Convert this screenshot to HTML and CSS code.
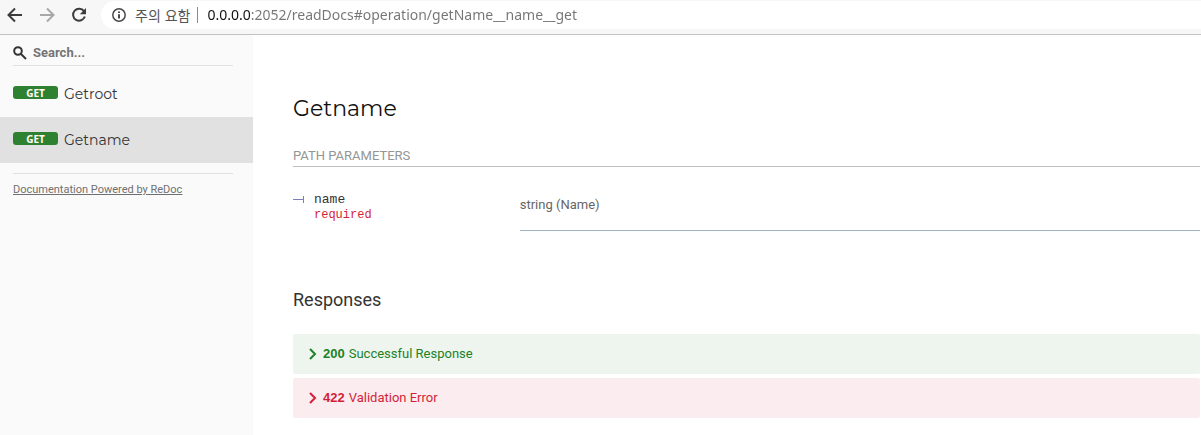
FILE: index.html
```html
<!DOCTYPE html>
<html lang="en">
<head>
<meta charset="utf-8">
<title>Getname</title>
<meta name="viewport" content="width=device-width, initial-scale=1">
<link rel="stylesheet" href="styles.css">
</head>
<body>
<header class="toolbar">
  <button class="nav-button" type="button" aria-label="Back"><svg width="16" height="16" viewBox="0 0 16 16"><path d="M15 8H2M8 1.5L1.5 8 8 14.500" /></svg></button>
  <button class="nav-button nav-button-off" type="button" aria-label="Forward"><svg width="16" height="16" viewBox="0 0 16 16"><path d="M1 8h13M8 1.500L14.500 8 8 14.500" /></svg></button>
  <button class="nav-button" type="button" aria-label="Reload"><svg width="16" height="16" viewBox="0 0 16 16"><path d="M13 4.200A6 6 0 1 0 13.800 9.500" /><path class="solid" d="M15 1v6.200H8.800z" /></svg></button>
  <div class="address">
    <svg class="info" width="14" height="14" viewBox="0 0 14 14" aria-hidden="true"><circle cx="7" cy="7" r="6.200" /><path d="M7 6.200v4.300M7 3.500v1.600" /></svg>
    <label class="warning" for="url" lang="ko">주의 요함</label>
    <input class="url" id="url" type="text" spellcheck="false" value="0.0.0.0:2052/readDocs#operation/getName__name__get">
  </div>
</header>
<div class="page">
  <aside class="sidebar">
    <div class="search">
      <svg width="14" height="14" viewBox="0 0 14 14" aria-hidden="true"><circle cx="5" cy="5" r="3.800" /><path d="M8 8l5 5" /></svg>
      <input class="search-input" type="text" placeholder="Search..." aria-label="Search">
    </div>
    <nav class="menu">
      <a class="menu-item" href="#getroot"><span class="method">GET</span><span>Getroot</span></a>
      <a class="menu-item menu-item-active" href="#getname"><span class="method">GET</span><span>Getname</span></a>
    </nav>
    <div class="credit"><a href="#redoc">Documentation Powered by ReDoc</a></div>
  </aside>
  <main class="content">
    <h1 class="title" id="getname">Getname</h1>
    <h2 class="section-label">PATH PARAMETERS</h2>
    <table class="params">
      <tbody>
        <tr>
          <td class="param-name">
            <div class="param">
              <svg width="12" height="9" viewBox="0 0 12 9" aria-hidden="true"><path d="M0 4.500h11M10.500 1v7" /></svg>
              <div class="param-text">name<span class="required">required</span></div>
            </div>
          </td>
          <td class="param-type">string (Name)</td>
        </tr>
      </tbody>
    </table>
    <h2 class="responses-title">Responses</h2>
    <div class="responses">
      <button class="response response-ok" type="button"><svg width="8" height="12" viewBox="0 0 8 12" aria-hidden="true"><path d="M1 1l5 5-5 5" /></svg><strong>200</strong><span>Successful Response</span></button>
      <button class="response response-error" type="button"><svg width="8" height="12" viewBox="0 0 8 12" aria-hidden="true"><path d="M1 1l5 5-5 5" /></svg><strong>422</strong><span>Validation Error</span></button>
    </div>
  </main>
</div>
</body>
</html>
```
FILE: styles.css
```css
* { box-sizing: border-box; }

body {
  margin: 0;
  min-height: 100vh;
  display: flex;
  flex-direction: column;
  background: #fff;
  color: #333;
  font-family: Roboto, "Liberation Sans", sans-serif;
  font-size: 13px;
}

svg {
  display: block;
  flex: none;
  fill: none;
  stroke: currentColor;
}

.toolbar {
  display: flex;
  align-items: center;
  gap: 16px;
  padding: 1px 0 5px 7px;
  background: #f7f7f7;
  border-bottom: 1px solid #c2c2c2;
}

.nav-button {
  padding: 0;
  border: 0;
  background: none;
  color: #3c3c3c;
  stroke-width: 2;
}

.nav-button-off { color: #a8a8a8; }
.solid { fill: currentColor; stroke: none; }

.address {
  flex: 1;
  display: flex;
  align-items: center;
  height: 28px;
  margin-left: -2px;
  padding-left: 11px;
  background: #fff;
  border-radius: 14px 0 0 14px;
}

.info {
  color: #4a4a4a;
  stroke-width: 2;
}

.info circle { stroke-width: 1.5px; }

.warning {
  margin-left: 9px;
  padding-right: 7px;
  border-right: 1px solid #8a8a8a;
  color: #555;
  font: 14px/16px "Noto Sans CJK KR", sans-serif;
}

.url {
  flex: 1;
  min-width: 0;
  margin-left: 9px;
  padding: 0;
  border: 0;
  outline: 0;
  color: #757575;
  font: 14px/20px "Noto Sans", sans-serif;
  background: linear-gradient(to right, #111 43px, #757575 43px);
  background-clip: text;
  -webkit-background-clip: text;
  -webkit-text-fill-color: transparent;
}

.page {
  flex: 1;
  display: flex;
}

.sidebar {
  flex: none;
  width: 253px;
  background: #fafafa;
}

.search {
  display: flex;
  align-items: center;
  gap: 6px;
  height: 31px;
  margin: 0 20px 5px 13px;
  padding-top: 6px;
  border-bottom: 1px solid #e1e1e1;
  color: #333;
  stroke-width: 2;
}

.search-input {
  flex: 1;
  min-width: 0;
  padding: 0;
  border: 0;
  outline: 0;
  background: none;
  font: bold 13px/20px Roboto, sans-serif;
}

.search-input::placeholder { color: #757575; }

.menu-item {
  display: flex;
  align-items: center;
  gap: 6px;
  height: 46px;
  padding: 0 13px;
  color: #333;
  font: 400 14px/20px Montserrat, Inter, sans-serif;
  text-decoration: none;
}

.menu-item-active { background: #e1e1e1; }

.method {
  width: 45px;
  height: 13px;
  margin-bottom: 3px;
  border-radius: 3px;
  background: #2f8132;
  color: #fff;
  font: bold 10px/14px "Noto Sans", sans-serif;
  text-align: center;
}

.credit {
  margin: 10px 20px 0 13px;
  padding-top: 8px;
  border-top: 1px solid #e1e1e1;
  font-size: 11px;
  line-height: 16px;
}

.credit a { color: #707070; }

.content {
  flex: 1;
  min-width: 0;
  padding: 58px 1px 17px 40px;
}

.title {
  margin: 0 0 22px;
  color: #111;
  font: 400 22px/32px Montserrat, Inter, sans-serif;
}

.section-label {
  margin: 0;
  padding-bottom: 1px;
  border-bottom: 1px solid #bfc2c2;
  color: #929696;
  font-size: 13px;
  font-weight: 400;
  line-height: 18px;
}

.params {
  width: 100%;
  margin-top: 20px;
  border-collapse: separate;
  border-spacing: 0;
}

.params td { padding: 0; vertical-align: top; }

.params .param-name {
  width: 25%;
  padding-top: 5px;
}

.param { display: flex; gap: 9px; }

.param svg {
  margin-top: 3px;
  color: #7d7dbb;
}

.param-text {
  color: #333;
  font: 13px/15px "Liberation Mono", monospace;
}

.required {
  display: block;
  color: #d41f3a;
  font-size: 12px;
  line-height: 16px;
}

.params .param-type {
  height: 44px;
  padding: 9px 0 16px;
  border-bottom: 1px solid #9fb4be;
  color: #666;
  line-height: 18px;
}

.responses-title {
  margin: 56px 0 22px;
  font-size: 18px;
  font-weight: 400;
  line-height: 25px;
}

.responses { display: grid; gap: 4px; }

.response {
  display: flex;
  align-items: center;
  height: 40px;
  padding: 0 16px;
  border: 0;
  border-radius: 2px;
  font: 13px/20px Roboto, sans-serif;
  text-align: left;
}

.response svg { stroke-width: 2; }

.response strong {
  margin: 0 4px 0 6px;
  font-family: "Liberation Sans", sans-serif;
}

.response-ok { background: #eef5ee; color: #1d8127; }
.response-error { background: #fbecef; color: #d41f3a; }
```
